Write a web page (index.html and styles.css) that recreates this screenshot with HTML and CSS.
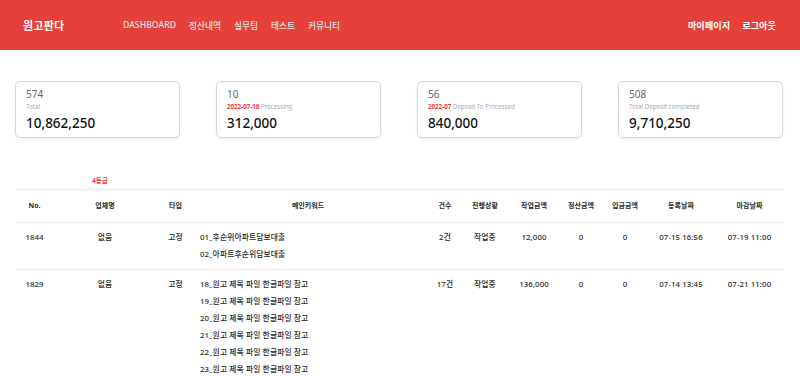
FILE: index.html
```html
<!DOCTYPE html>
<html lang="ko">
<head>
<meta charset="utf-8">
<title>원고판다</title>
<link rel="stylesheet" href="styles.css">
</head>
<body>
<header class="topbar">
  <div class="logo">원고판다</div>
  <nav class="nav">
    <a>DASHBOARD</a>
    <a>정산내역</a>
    <a>실무팀</a>
    <a>테스트</a>
    <a>커뮤니티</a>
  </nav>
  <div class="user">
    <a>마이페이지</a>
    <a>로그아웃</a>
  </div>
</header>

<section class="cards">
  <div class="card">
    <div class="count">574</div>
    <div class="label">Total</div>
    <div class="value">10,862,250</div>
  </div>
  <div class="card">
    <div class="count">10</div>
    <div class="label"><b class="red">2022-07-16</b> Processing</div>
    <div class="value">312,000</div>
  </div>
  <div class="card">
    <div class="count">56</div>
    <div class="label"><b class="red">2022-07</b> Deposit To Processed</div>
    <div class="value">840,000</div>
  </div>
  <div class="card">
    <div class="count">508</div>
    <div class="label">Total Deposit completed</div>
    <div class="value">9,710,250</div>
  </div>
</section>

<div class="grade">4등급</div>

<section class="table">
  <div class="row head">
    <div>No.</div>
    <div>업체명</div>
    <div>타입</div>
    <div class="kwhead">메인키워드</div>
    <div>건수</div>
    <div>진행상황</div>
    <div>작업금액</div>
    <div>정산금액</div>
    <div>입금금액</div>
    <div>등록날짜</div>
    <div>마감날짜</div>
  </div>
  <div class="row">
    <div>1844</div>
    <div>없음</div>
    <div>고정</div>
    <div class="kw">
      <div>01_후순위아파트담보대출</div>
      <div>02_아파트후순위담보대출</div>
    </div>
    <div>2건</div>
    <div>작업중</div>
    <div>12,000</div>
    <div>0</div>
    <div>0</div>
    <div>07-15 16:56</div>
    <div>07-19 11:00</div>
  </div>
  <div class="row">
    <div>1829</div>
    <div>없음</div>
    <div>고정</div>
    <div class="kw">
      <div>18_원고 제목 파일 한글파일 참고</div>
      <div>19_원고 제목 파일 한글파일 참고</div>
      <div>20_원고 제목 파일 한글파일 참고</div>
      <div>21_원고 제목 파일 한글파일 참고</div>
      <div>22_원고 제목 파일 한글파일 참고</div>
      <div>23_원고 제목 파일 한글파일 참고</div>
    </div>
    <div>17건</div>
    <div>작업중</div>
    <div>136,000</div>
    <div>0</div>
    <div>0</div>
    <div>07-14 13:45</div>
    <div>07-21 11:00</div>
  </div>
</section>
</body>
</html>
```

FILE: styles.css
```css
* { box-sizing: border-box; }

body {
  margin: 0;
  font-family: "Noto Sans", "Noto Sans CJK KR", sans-serif;
  color: #222;
  background: #fff;
}

.topbar {
  height: 50px;
  background: #e5403a;
  display: flex;
  align-items: center;
  padding: 0 24px 0 23px;
}

.logo {
  color: #fff;
  font-weight: 700;
  font-size: 11px;
  letter-spacing: 0.2px;
  width: 100px;
}

.nav {
  display: flex;
  gap: 13px;
  font-size: 8.7px;
  color: #e2e2e2;
  font-weight: 500;
}

.user {
  margin-left: auto;
  display: flex;
  gap: 12px;
  color: #fff;
  font-size: 9.2px;
  font-weight: 700;
}

.cards {
  display: flex;
  gap: 36px;
  padding: 31px 16px 0 15px;
}

.card {
  width: 165px;
  height: 57px;
  border: 1px solid #d6d6d6;
  border-radius: 5px;
  box-shadow: 0 1px 3px rgba(0, 0, 0, 0.08);
  padding: 4px 10px 0 10px;
}

.count {
  font-size: 10px;
  color: #666;
  line-height: 16px;
}

.label {
  font-size: 6.2px;
  color: #aaa;
  line-height: 9px;
}

.red { color: #f03a3a; font-weight: 700; }

.value {
  font-size: 13.5px;
  font-weight: 500;
  color: #111;
  line-height: 20px;
  margin-top: 2px;
}

.grade {
  margin-top: 38px;
  padding-left: 92px;
  font-size: 6.5px;
  font-weight: 700;
  color: #f03a3a;
  line-height: 10px;
}

.table {
  margin: 3px 16px 0 16px;
}

.row {
  display: grid;
  grid-template-columns: 37px 104px 37px 235px 32px 48px 50px 44px 44px 68px 69px;
  border-bottom: 1px solid #ececec;
  font-size: 7.8px;
  letter-spacing: 0.1px;
  font-weight: 500;
  color: #2a2a2a;
  line-height: 17px;
  padding: 6px 0;
  text-align: center;
}

.row.head {
  border-top: 1px solid #ececec;
  padding: 0;
  line-height: 32px;
  font-size: 7px;
  font-weight: 700;
  letter-spacing: 0;
}

.kwhead { padding-right: 7px; }

.kw {
  text-align: left;
  padding-left: 6px;
}
```
